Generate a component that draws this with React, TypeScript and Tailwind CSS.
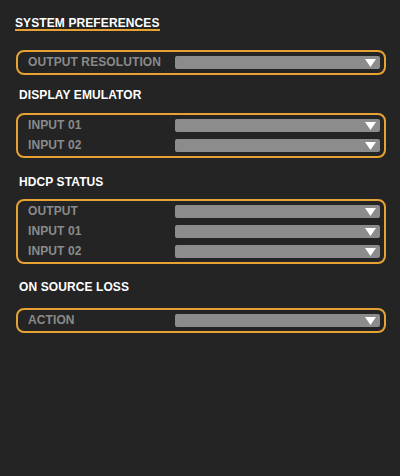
const ORANGE = "border-[#e6a233]";

type Section = {
  heading?: string;
  headingClass?: string;
  boxClass: string;
  rows: string[];
};

const sections: Section[] = [
  { boxClass: "mt-[19px]", rows: ["OUTPUT RESOLUTION"] },
  {
    heading: "DISPLAY EMULATOR",
    headingClass: "mt-[14px]",
    boxClass: "mt-[12px]",
    rows: ["INPUT 01", "INPUT 02"],
  },
  {
    heading: "HDCP STATUS",
    headingClass: "mt-[18px]",
    boxClass: "mt-[11px]",
    rows: ["OUTPUT", "INPUT 01", "INPUT 02"],
  },
  {
    heading: "ON SOURCE LOSS",
    headingClass: "mt-[17px]",
    boxClass: "mt-[15px]",
    rows: ["ACTION"],
  },
];

function SelectBar() {
  return (
    <div className="flex h-[13px] w-[205px] items-center justify-end rounded-[2px] bg-[#8c8c8c] pr-[4px]">
      <svg width="11" height="8" viewBox="0 0 11 8">
        <polygon points="0,0 11,0 5.5,8" fill="#ffffff" />
      </svg>
    </div>
  );
}

export default function App() {
  return (
    <div
      className="h-[476px] w-[400px] bg-[#242424] pt-[18px]"
      style={{ fontFamily: '"Liberation Sans", Arial, sans-serif' }}
    >
      <div className="flex pl-[15px]">
        <span className={`border-b-2 ${ORANGE} text-[12px] font-bold leading-[11px] tracking-[0.1px] text-white`}>
          SYSTEM PREFERENCES
        </span>
      </div>

      {sections.map((section, i) => (
        <div key={i}>
          {section.heading ? (
            <h2
              className={`${section.headingClass} pl-[19px] text-[12px] font-bold leading-[12px] tracking-[0.1px] text-white`}
            >
              {section.heading}
            </h2>
          ) : null}
          <div
            className={`${section.boxClass} ml-4 flex w-[370px] flex-col gap-[7px] rounded-[8px] border-2 ${ORANGE} py-1 pl-[10px] pr-1`}
          >
            {section.rows.map((row) => (
              <div key={row} className="flex h-[13px] items-center">
                <span className="w-[147px] text-[12px] font-bold leading-[13px] tracking-[0.1px] text-[#8a8a8a]">
                  {row}
                </span>
                <SelectBar />
              </div>
            ))}
          </div>
        </div>
      ))}
    </div>
  );
}
